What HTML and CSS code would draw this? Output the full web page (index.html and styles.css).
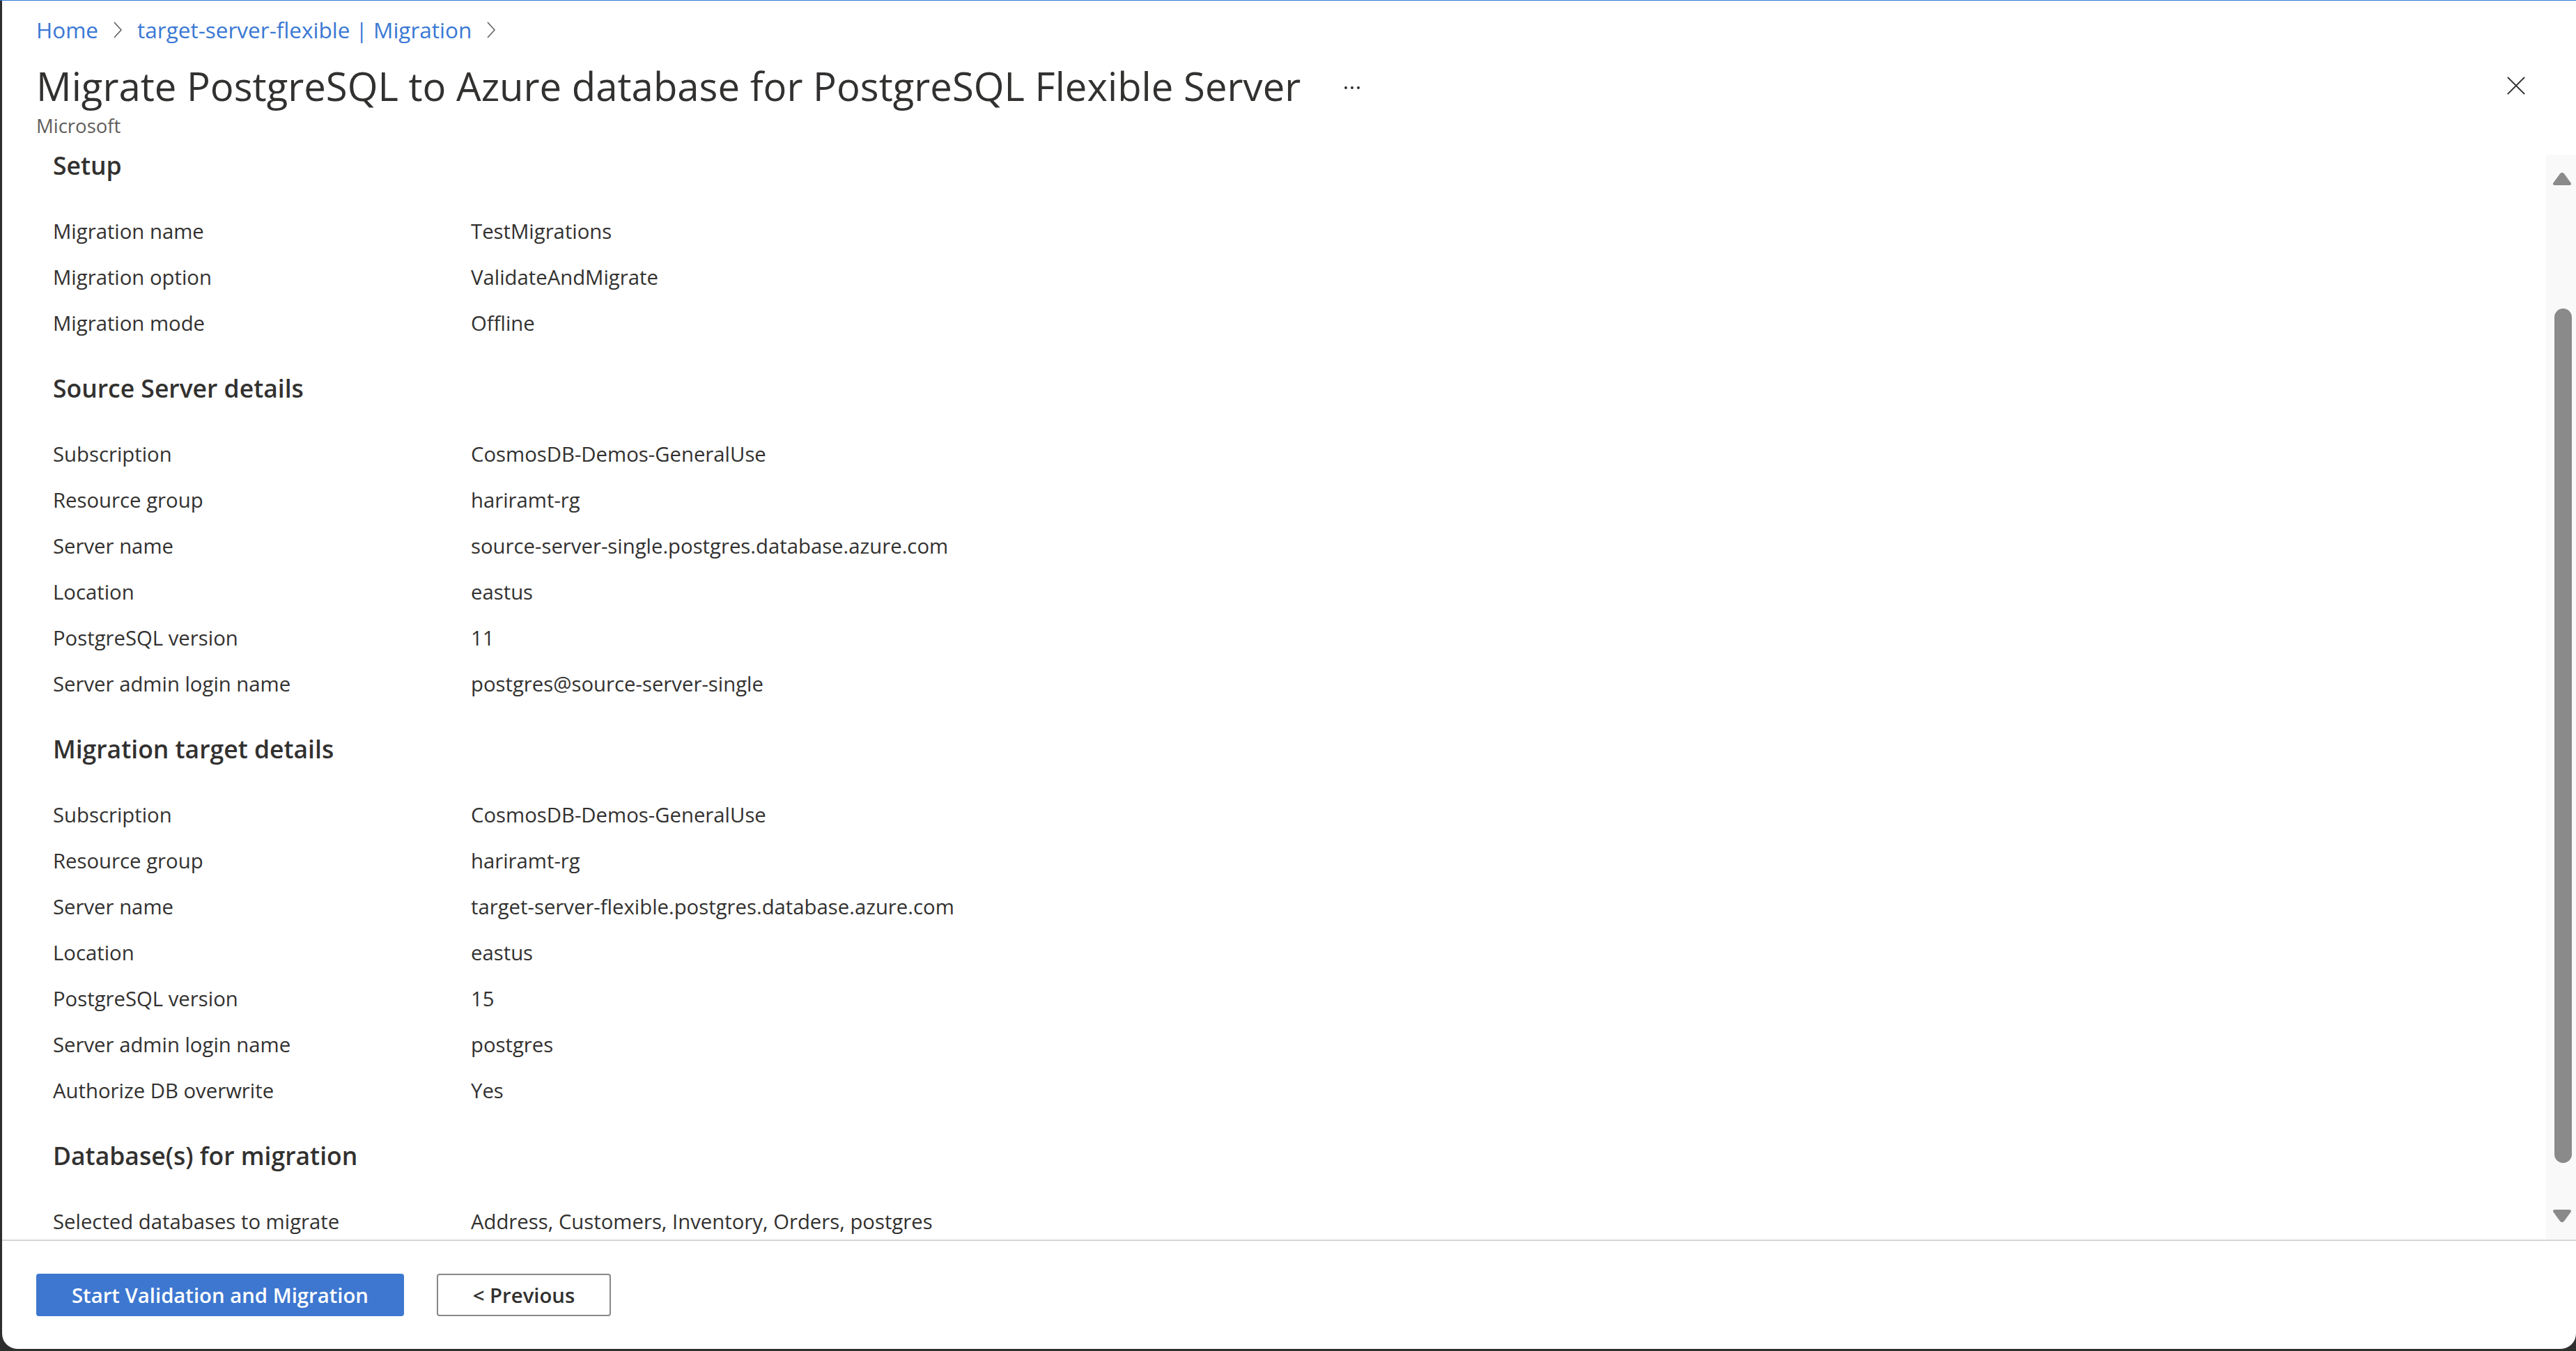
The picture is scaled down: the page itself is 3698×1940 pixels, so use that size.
FILE: index.html
```html
<!DOCTYPE html>
<html lang="en">
<head>
<meta charset="utf-8">
<title>Migrate PostgreSQL to Azure database for PostgreSQL Flexible Server</title>
<link rel="stylesheet" href="styles.css">
</head>
<body>
<div class="topline"></div>
<div class="panel">
  <header class="blade-header">
    <nav class="breadcrumb">
      <a class="crumb" href="#">Home</a>
      <svg class="chev" viewBox="0 0 12 24" width="12" height="24"><polyline points="1,1 11,12 1,23" fill="none" stroke="#605e5c" stroke-width="1.6"/></svg>
      <a class="crumb" href="#">target-server-flexible | Migration</a>
      <svg class="chev" viewBox="0 0 12 24" width="12" height="24"><polyline points="1,1 11,12 1,23" fill="none" stroke="#605e5c" stroke-width="1.6"/></svg>
    </nav>
    <div class="title-row">
      <h1 class="title">Migrate PostgreSQL to Azure database for PostgreSQL Flexible Server</h1>
      <span class="more"><i></i><i></i><i></i></span>
      <span class="spacer"></span>
      <svg class="close" viewBox="0 0 30 30" width="30" height="30"><path d="M2 2 L28 28 M28 2 L2 28" stroke="#323130" stroke-width="2.2" fill="none"/></svg>
    </div>
    <div class="subtitle">Microsoft</div>
  </header>

  <div class="blade-body">
    <div class="content">
      <section class="section">
        <h2 class="sec-title">Setup</h2>
        <div class="kv"><span class="k">Migration name</span><span class="v">TestMigrations</span></div>
        <div class="kv"><span class="k">Migration option</span><span class="v">ValidateAndMigrate</span></div>
        <div class="kv"><span class="k">Migration mode</span><span class="v">Offline</span></div>
      </section>
      <section class="section">
        <h2 class="sec-title">Source Server details</h2>
        <div class="kv"><span class="k">Subscription</span><span class="v">CosmosDB-Demos-GeneralUse</span></div>
        <div class="kv"><span class="k">Resource group</span><span class="v">hariramt-rg</span></div>
        <div class="kv"><span class="k">Server name</span><span class="v">source-server-single.postgres.database.azure.com</span></div>
        <div class="kv"><span class="k">Location</span><span class="v">eastus</span></div>
        <div class="kv"><span class="k">PostgreSQL version</span><span class="v">11</span></div>
        <div class="kv"><span class="k">Server admin login name</span><span class="v">postgres@source-server-single</span></div>
      </section>
      <section class="section">
        <h2 class="sec-title">Migration target details</h2>
        <div class="kv"><span class="k">Subscription</span><span class="v">CosmosDB-Demos-GeneralUse</span></div>
        <div class="kv"><span class="k">Resource group</span><span class="v">hariramt-rg</span></div>
        <div class="kv"><span class="k">Server name</span><span class="v">target-server-flexible.postgres.database.azure.com</span></div>
        <div class="kv"><span class="k">Location</span><span class="v">eastus</span></div>
        <div class="kv"><span class="k">PostgreSQL version</span><span class="v">15</span></div>
        <div class="kv"><span class="k">Server admin login name</span><span class="v">postgres</span></div>
        <div class="kv"><span class="k">Authorize DB overwrite</span><span class="v">Yes</span></div>
      </section>
      <section class="section">
        <h2 class="sec-title">Database(s) for migration</h2>
        <div class="kv"><span class="k">Selected databases to migrate</span><span class="v">Address, Customers, Inventory, Orders, postgres</span></div>
      </section>
    </div>
    <div class="scrollbar">
      <svg class="arrow" viewBox="0 0 28 20" width="28" height="20"><path d="M11 2.5 Q14 -1 17 2.5 L26.5 15.5 Q28 19 24.5 19 L3.5 19 Q0 19 1.5 15.5 Z" fill="#8a8a8a"/></svg>
      <div class="track"><div class="thumb"></div></div>
      <svg class="arrow" viewBox="0 0 28 20" width="28" height="20"><path d="M11 17.5 Q14 21 17 17.5 L26.5 4.5 Q28 1 24.5 1 L3.5 1 Q0 1 1.5 4.5 Z" fill="#8a8a8a"/></svg>
    </div>
  </div>

  <footer class="blade-footer">
    <button class="btn primary">Start Validation and Migration</button>
    <button class="btn secondary">&lt; Previous</button>
  </footer>
</div>
</body>
</html>
```
FILE: styles.css
```css
* { box-sizing: border-box; }
html, body { margin: 0; padding: 0; height: 100%; }
body {
  background: #2e2e2e;
  font-family: "Open Sans", "Noto Sans", sans-serif;
  color: #323130;
  overflow: hidden;
}
.topline { height: 1px; background: #3a78d4; }
.panel {
  margin-left: 3px;
  height: calc(100vh - 4px);
  background: #ffffff;
  border-radius: 0 0 22px 22px;
  display: flex;
  flex-direction: column;
  overflow: hidden;
}
.blade-header { padding: 20px 0 0 49px; height: 196px; flex: none; }
.breadcrumb { display: flex; align-items: center; height: 44px; gap: 22px; }
.crumb { color: #3a78d4; text-decoration: none; font-size: 31.5px; line-height: 44px; }
.chev { display: block; width: 12px; height: 24px; }
.title-row { display: flex; align-items: center; margin-top: 23px; height: 70px; padding-right: 72px; }
.title { margin: 0; font-size: 56.3px; font-weight: 400; line-height: 70px; color: #323130; white-space: nowrap; }
.more { display: flex; gap: 5px; margin-left: 63px; margin-top: 6px; }
.more i { display: block; width: 4px; height: 4px; border-radius: 50%; background: #323130; }
.spacer { flex: 1; }
.close { display: block; width: 28px; height: 28px; }
.subtitle { margin-top: 5px; font-size: 27.5px; line-height: 36px; color: #605e5c; }

.blade-body { flex: 1; display: flex; min-height: 0; overflow: hidden; }
.content { flex: 1; padding: 16px 0 0 73px; overflow: hidden; }
.section + .section { margin-top: 36px; }
.sec-title { margin: 0 0 38px; font-size: 35.5px; font-weight: 600; line-height: 48px; color: #323130; }
.kv { display: grid; grid-template-columns: 600px 1fr; height: 66px; line-height: 66px; font-size: 29.3px; }
.k, .v { color: #323130; white-space: nowrap; }

.scrollbar {
  width: 43px; flex: none; margin-top: 25px; background: #f9f9f9;
  display: flex; flex-direction: column; align-items: center; padding: 25px 0 24px 3px;
}
.arrow { display: block; flex: none; }
.track { flex: 1; width: 100%; padding: 176px 6px 66px 9px; display: flex; }
.thumb { flex: 1; width: 28px; background: #8a8a8a; border-radius: 14px; }

.blade-footer {
  flex: none; border-top: 2px solid #d6d6d6;
  padding: 47px 49px 47px; display: flex; gap: 47px; height: 157px;
}
.btn {
  height: 61px; border-radius: 4px; font-family: inherit; font-size: 29.3px; font-weight: 600;
  cursor: pointer; padding: 0;
}
.primary { width: 528px; background: #3d77d0; border: none; color: #ffffff; }
.secondary { width: 250px; background: #ffffff; border: 2px solid #8a8886; color: #323130; }
```
